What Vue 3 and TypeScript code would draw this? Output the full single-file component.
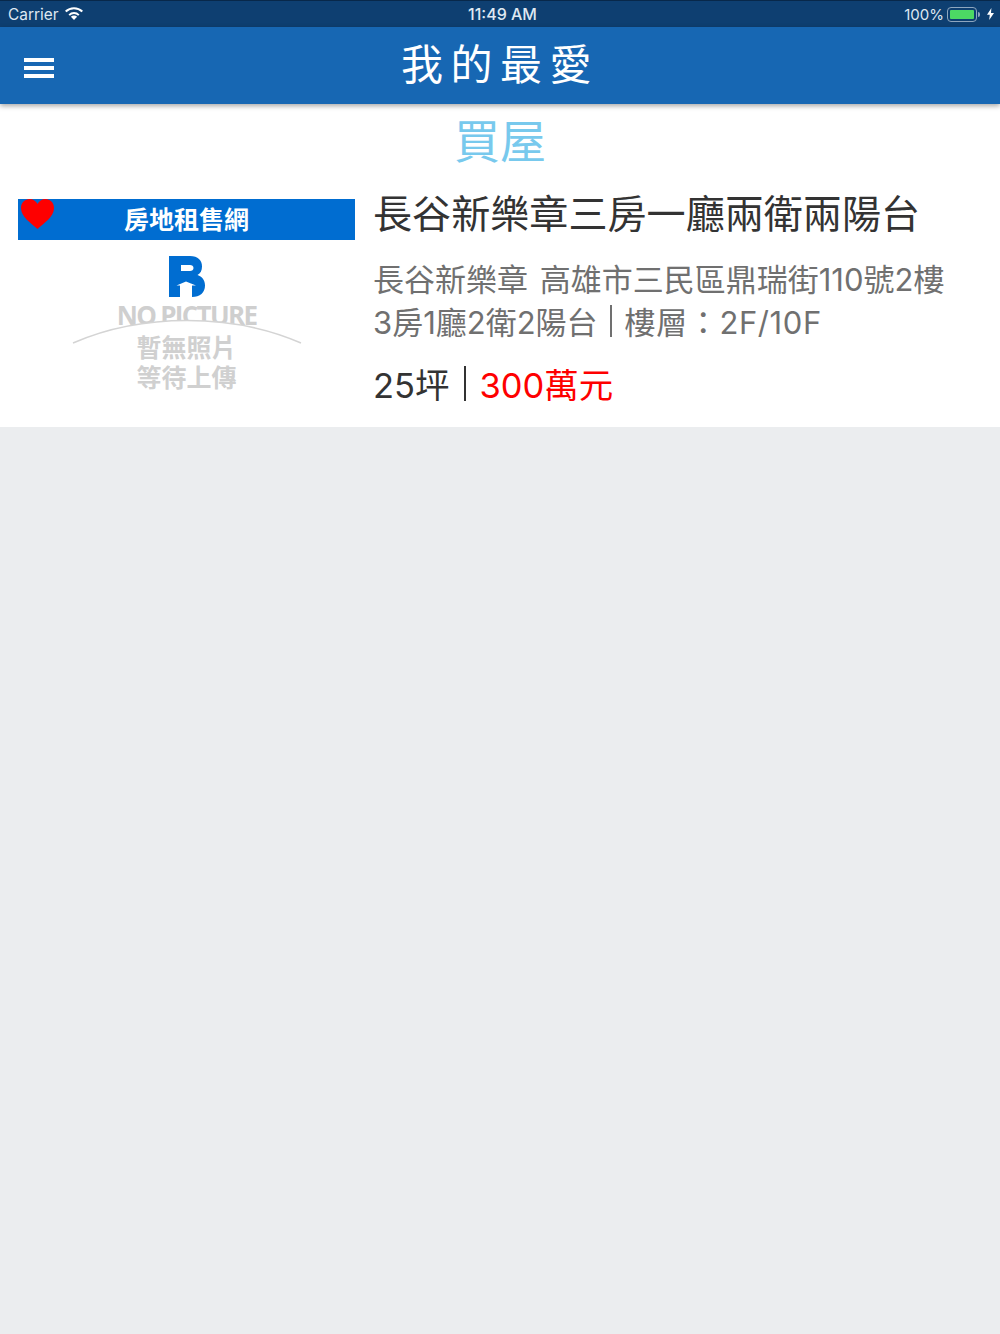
<script setup lang="ts">
// 收藏列表，目前只有一筆資料
const item = {
  pic: '房地租售網',
  title: '長谷新樂章三房一廳兩衛兩陽台',
  address: '長谷新樂章 高雄市三民區鼎瑞街110號2樓',
  rooms: '3房1廳2衛2陽台',
  floor: '樓層：2F/10F',
  area: '25坪',
  price: '300萬元'
}
</script>

<template>
  <div class="page" lang="zh-TW">
    <div class="status">
      <div class="status-left">
        <span class="carrier">Carrier</span>
        <svg class="wifi" width="18" height="13" viewBox="0 0 18 13">
          <path d="M9 13 5.900 9.700a4.400 4.400 0 0 1 6.200 0Z" fill="#fff" />
          <path d="M3.500 7.400a7.700 7.700 0 0 1 11 0l-1.400 1.300a5.800 5.800 0 0 0-8.200 0Z" fill="#fff" />
          <path d="M0 3.800a13 13 0 0 1 18 0l-1.400 1.400a11 11 0 0 0-15.200 0Z" fill="#fff" />
        </svg>
      </div>
      <div class="status-time">11:49 AM</div>
      <div class="status-right">
        <span>100%</span>
        <div class="battery"><div class="battery-fill"></div></div>
        <div class="battery-tip"></div>
        <svg width="7" height="12" viewBox="0 0 7 12">
          <path d="M4.400 0 0 6.800h2.800L2.200 12 7 4.900H4Z" fill="#fff" />
        </svg>
      </div>
    </div>

    <header class="navbar">
      <button class="menu" aria-label="menu">
        <span></span><span></span><span></span>
      </button>
      <h1>我的最愛</h1>
    </header>

    <main class="list">
      <h2 class="category">買屋</h2>
      <div class="row">
        <div class="thumb">
          <div class="thumb-band">{{ item.pic }}</div>
          <svg class="heart" width="33" height="30" viewBox="0 0 33 30">
            <path d="M16.500 30C10 24 0 18 0 9 0 3.500 4 0 8.500 0 12 0 15 2 16.500 5 18 2 21 0 24.500 0 29 0 33 3.500 33 9 33 18 23 24 16.500 30Z" fill="#fe0000" />
          </svg>
          <svg class="logo" width="36" height="41" viewBox="0 0 36 41">
            <path fill-rule="evenodd" d="M0 0H21C29 0 33 4.500 33 10.500 33 14.500 31.500 17.500 28.500 19 33 20.500 36 24 36 29.500 36 36.500 31 41 23 41V29.500H27L17 25.500 7.500 29.500H11V41H0ZM12 9V15H21C23 15 24.500 14 24.500 12S23 9 21 9Z" fill="#006dd1" />
          </svg>
          <div class="nopic-en">NO PICTURE</div>
          <svg class="arc" width="230" height="26" viewBox="0 0 230 26">
            <path d="M1 24C70-6 160-6 229 24V26H1Z" fill="#fff" />
            <path d="M1 24C70-6 160-6 229 24" fill="none" stroke="#d4d4d4" stroke-width="1.500" />
          </svg>
          <div class="nopic-zh">暫無照片<br />等待上傳</div>
        </div>
        <div class="info">
          <div class="title">{{ item.title }}</div>
          <div class="detail">
            <div class="address">{{ item.address }}</div>
            <div>{{ item.rooms }}<i class="sep"></i><span class="floor">{{ item.floor }}</span></div>
          </div>
          <div class="meta">{{ item.area }}<i class="sep dark"></i><span class="price">{{ item.price }}</span></div>
        </div>
      </div>
    </main>
  </div>
</template>

<style>
html, body {
  margin: 0;
  background: #ebedef;
}
</style>

<style scoped>
.page {
  width: 1000px;
  height: 1334px;
  overflow: hidden;
  background: #ebedef;
  font-family: "Liberation Sans", "Noto Sans CJK TC", sans-serif;
}

.status {
  height: 27px;
  box-sizing: border-box;
  padding: 0 6px 0 8px;
  display: flex;
  align-items: center;
  justify-content: space-between;
  position: relative;
  background: #0e3f71;
  border-top: 1px solid #08284a;
  color: #dfe8f1;
  font-family: Inter, "Liberation Sans", sans-serif;
  font-size: 15px;
}

.carrier {
  font-size: 15.400px;
}

.status-left,
.status-right {
  display: flex;
  align-items: center;
}

.wifi {
  margin-left: 7px;
  margin-top: -1px;
}

.status-time {
  position: absolute;
  left: 468px;
  top: 4px;
  font-size: 16px;
  font-weight: 500;
  line-height: 18px;
}

.battery {
  width: 30px;
  height: 15px;
  margin-left: 3px;
  box-sizing: border-box;
  padding: 2px;
  border: 1px solid #8ea6bf;
  border-radius: 4px;
}

.battery-fill {
  height: 100%;
  background: #4cd964;
  border-radius: 1px;
}

.battery-tip {
  width: 2px;
  height: 5px;
  margin: 0 7px 0 1px;
  background: #8ea6bf;
  border-radius: 0 2px 2px 0;
}

.navbar {
  height: 77px;
  position: relative;
  display: flex;
  align-items: center;
  justify-content: center;
  background: #1767b3;
  box-shadow: 0 2px 5px rgba(0, 0, 0, 0.35);
  z-index: 1;
}

.navbar h1 {
  margin: 0 0 8px;
  color: #fff;
  font-size: 42px;
  font-weight: 400;
  letter-spacing: 7.500px;
}

.menu {
  position: absolute;
  left: 24px;
  top: 31px;
  width: 30px;
  padding: 0;
  border: 0;
  background: none;
  display: flex;
  flex-direction: column;
  gap: 4.500px;
}

.menu span {
  height: 3.500px;
  background: #fff;
}

.list {
  height: 323px;
  background: #fff;
  overflow: hidden;
}

.category {
  margin: 0;
  padding-top: 11px;
  height: 55px;
  color: #78c9ed;
  font-size: 46px;
  font-weight: 400;
  line-height: 54px;
  text-align: center;
}

.row {
  display: flex;
  padding: 29px 0 0 18px;
}

.thumb {
  width: 337px;
  position: relative;
  height: 200px;
  flex-shrink: 0;
  display: flex;
  flex-direction: column;
  align-items: center;
}

.thumb-band {
  width: 100%;
  height: 41px;
  background: #006dd1;
  color: #fff;
  font-size: 25px;
  font-weight: 700;
  line-height: 43px;
  text-align: center;
}

.heart {
  position: absolute;
  left: 3px;
  top: 0;
}

.logo {
  margin-top: 16px;
}

.nopic-en {
  margin-top: 1px;
  color: #cfcfcf;
  font-family: "Open Sans", sans-serif;
  font-size: 26px;
  font-weight: 700;
  letter-spacing: -1.700px;
  line-height: 34px;
  white-space: nowrap;
}

.arc {
  position: absolute;
  left: 54px;
  top: 120px;
}

.nopic-zh {
  position: absolute;
  left: 0;
  right: 0;
  top: 134px;
  color: #d0d0d0;
  font-size: 25px;
  font-weight: 700;
  line-height: 30px;
  text-align: center;
}

.info {
  margin-left: 18px;
  margin-top: -9px;
  color: #333;
}

.title {
  font-size: 39.100px;
  line-height: 50px;
  white-space: nowrap;
}

.detail {
  margin-top: 18px;
  color: #707070;
  font-family: Inter, "Noto Sans CJK TC", sans-serif;
  font-size: 31px;
  line-height: 43px;
  white-space: nowrap;
}

.address {
  word-spacing: 3px;
}

.floor {
  letter-spacing: 0.600px;
}

.meta {
  margin-top: 20px;
  font-family: Inter, "Noto Sans CJK TC", sans-serif;
  font-size: 34.500px;
  line-height: 44px;
  white-space: nowrap;
}

.sep {
  display: inline-block;
  width: 2px;
  height: 32px;
  margin: 0 13px 0 12px;
  vertical-align: -3px;
  background: #707070;
}

.sep.dark {
  height: 35px;
  margin: 0 14px;
  background: #333;
}

.price {
  color: #fe0000;
}
</style>
